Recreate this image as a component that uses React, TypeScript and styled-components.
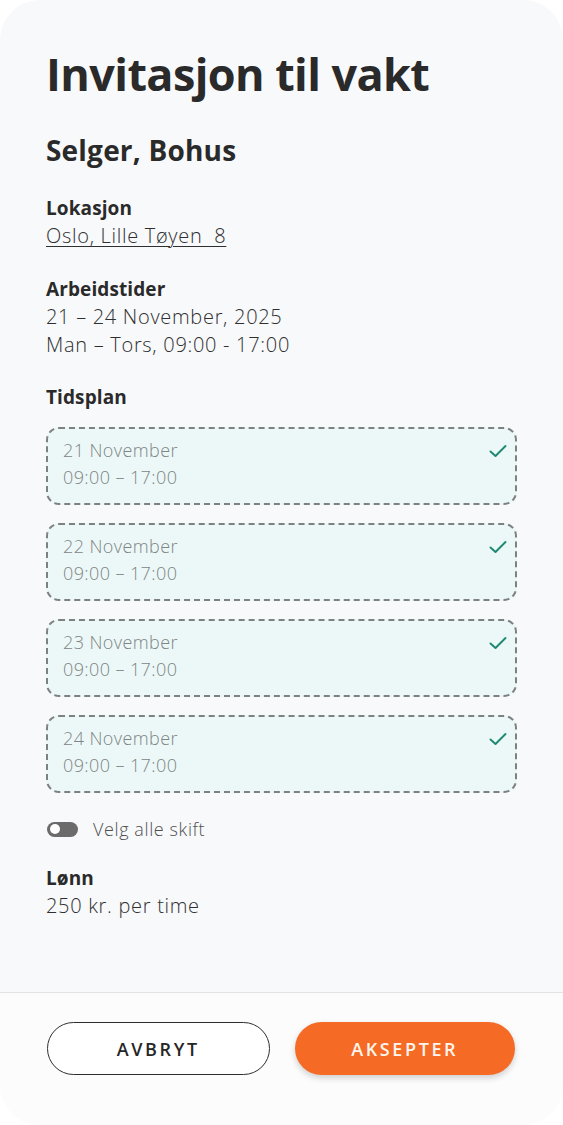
import styled, { createGlobalStyle } from "styled-components";

const GlobalStyle = createGlobalStyle`
  html, body {
    margin: 0;
    padding: 0;
    background: #ffffff;
  }
  body {
    font-family: "Open Sans", "Noto Sans", sans-serif;
    color: #2b2b2b;
  }
  * { box-sizing: border-box; }
`;

interface IShift {
  date: string;
  time: string;
}

const shifts: IShift[] = [
  { date: "21 November", time: "09:00 – 17:00" },
  { date: "22 November", time: "09:00 – 17:00" },
  { date: "23 November", time: "09:00 – 17:00" },
  { date: "24 November", time: "09:00 – 17:00" },
];

const StyledSheet = styled.div`
  width: 563px;
  height: 1125px;
  background: #f8f9fb;
  border-radius: 40px;
  display: flex;
  flex-direction: column;
  overflow: hidden;
`;

const StyledContent = styled.div`
  flex: 1;
  padding: 44px 46px 0 46px;
`;

const StyledTitle = styled.h1`
  margin: 0;
  font-size: 45px;
  line-height: 60px;
  font-weight: 700;
  color: #2a2a2a;
  letter-spacing: -0.6px;
`;

const StyledSubtitle = styled.h2`
  margin: 28px 0 0 0;
  font-size: 28px;
  line-height: 36px;
  font-weight: 700;
  color: #2a2a2a;
  letter-spacing: 0.2px;
`;

const StyledSection = styled.section<{ $top: number }>`
  margin-top: ${(p) => p.$top}px;
`;

const StyledLabel = styled.div`
  font-size: 19px;
  line-height: 28px;
  font-weight: 700;
  color: #2a2a2a;
  letter-spacing: 0.1px;
`;

const StyledText = styled.div`
  font-size: 20px;
  line-height: 28px;
  font-weight: 300;
  color: #2f2f2f;
  letter-spacing: 0.7px;
`;

const StyledLink = styled(StyledText)`
  display: inline-block;
  text-decoration: underline;
  text-decoration-thickness: 1px;
  text-underline-offset: 3px;
  white-space: pre;
`;

const StyledShiftList = styled.div`
  margin-top: 16px;
  display: flex;
  flex-direction: column;
  gap: 18px;
`;

const StyledShift = styled.div`
  position: relative;
  height: 78px;
  background: #ecf8f8;
  border: 2px dashed #7d8180;
  border-radius: 13px;
  padding: 8px 15px 0 15px;
`;

const StyledShiftText = styled.div`
  font-size: 18px;
  line-height: 27px;
  font-weight: 300;
  color: #7f8584;
  letter-spacing: 0.4px;
`;

const StyledCheck = styled.svg`
  position: absolute;
  top: 14px;
  right: 7px;
  width: 20px;
  height: 16px;
`;

const StyledToggleRow = styled.div`
  margin-top: 24px;
  display: flex;
  align-items: center;
  gap: 15px;
`;

const StyledToggle = styled.div`
  width: 31px;
  height: 15px;
  border-radius: 8px;
  background: #6b6b6b;
  display: flex;
  align-items: center;
  padding: 0 3px;
  margin-left: 1px;
`;

const StyledKnob = styled.div`
  width: 10px;
  height: 10px;
  border-radius: 50%;
  background: #fff;
`;

const StyledToggleLabel = styled.div`
  font-size: 18px;
  line-height: 24px;
  font-weight: 300;
  color: #505050;
  letter-spacing: 0.6px;
`;

const StyledFooter = styled.div`
  border-top: 1.5px solid #e2e3e5;
  background: #fcfcfd;
  height: 133px;
  display: flex;
  gap: 25px;
  padding: 29px 48px 0 47px;
`;

const StyledButton = styled.button<{ $primary?: boolean }>`
  flex: 1;
  height: 53px;
  border-radius: 27px;
  font-family: "Open Sans", "Noto Sans", sans-serif;
  font-size: 18px;
  font-weight: 600;
  letter-spacing: 2.6px;
  cursor: pointer;
  border: ${(p) => (p.$primary ? "none" : "1.5px solid #2e2e2e")};
  background: ${(p) => (p.$primary ? "#f56b26" : "#ffffff")};
  color: ${(p) => (p.$primary ? "#fff6ee" : "#262626")};
  box-shadow: ${(p) => (p.$primary ? "0 3px 6px rgba(0,0,0,0.18)" : "none")};
`;

function Check() {
  return (
    <StyledCheck viewBox="0 0 20 16" fill="none">
      <path
        d="M2.5 8.5 L7.5 13 L17.5 3"
        stroke="#1e8a72"
        strokeWidth="2"
        strokeLinecap="round"
        strokeLinejoin="round"
      />
    </StyledCheck>
  );
}

export default function App() {
  return (
    <>
      <GlobalStyle />
      <StyledSheet>
        <StyledContent>
          <StyledTitle>Invitasjon til vakt</StyledTitle>
          <StyledSubtitle>Selger, Bohus</StyledSubtitle>

          <StyledSection $top={26}>
            <StyledLabel>Lokasjon</StyledLabel>
            <StyledLink>Oslo, Lille Tøyen  8</StyledLink>
          </StyledSection>

          <StyledSection $top={25}>
            <StyledLabel>Arbeidstider</StyledLabel>
            <StyledText>21 – 24 November, 2025</StyledText>
            <StyledText>Man – Tors, 09:00 - 17:00</StyledText>
          </StyledSection>

          <StyledSection $top={24}>
            <StyledLabel>Tidsplan</StyledLabel>
            <StyledShiftList>
              {shifts.map((s, idx) => (
                <StyledShift key={idx}>
                  <StyledShiftText>{s.date}</StyledShiftText>
                  <StyledShiftText>{s.time}</StyledShiftText>
                  <Check />
                </StyledShift>
              ))}
            </StyledShiftList>
          </StyledSection>

          <StyledToggleRow>
            <StyledToggle>
              <StyledKnob />
            </StyledToggle>
            <StyledToggleLabel>Velg alle skift</StyledToggleLabel>
          </StyledToggleRow>

          <StyledSection $top={23}>
            <StyledLabel>Lønn</StyledLabel>
            <StyledText>250 kr. per time</StyledText>
          </StyledSection>
        </StyledContent>

        <StyledFooter>
          <StyledButton>AVBRYT</StyledButton>
          <StyledButton $primary>AKSEPTER</StyledButton>
        </StyledFooter>
      </StyledSheet>
    </>
  );
}
